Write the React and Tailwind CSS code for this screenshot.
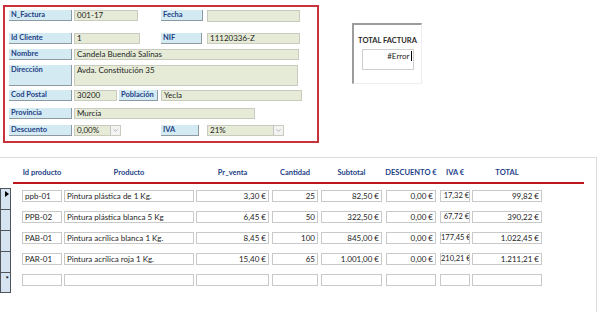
import { FiChevronDown } from 'react-icons/fi';

const rows = [
  { id: 'ppb-01', name: 'Pintura plástica de 1 Kg.', price: '3,30 €', qty: '25', sub: '82,50 €', desc: '0,00 €', iva: '17,32 €', total: '99,82 €' },
  { id: 'PPB-02', name: 'Pintura plástica blanca 5 Kg', price: '6,45 €', qty: '50', sub: '322,50 €', desc: '0,00 €', iva: '67,72 €', total: '390,22 €' },
  { id: 'PAB-01', name: 'Pintura acrílica blanca 1 Kg.', price: '8,45 €', qty: '100', sub: '845,00 €', desc: '0,00 €', iva: '177,45 €', total: '1.022,45 €' },
  { id: 'PAR-01', name: 'Pintura acrílica roja 1 Kg.', price: '15,40 €', qty: '65', sub: '1.001,00 €', desc: '0,00 €', iva: '210,21 €', total: '1.211,21 €' },
];

const cols = [
  { key: 'id', w: 'w-[40px]', ml: 'ml-0', pad: 'px-[2px] text-[8px]', align: 'text-left', head: 'Id producto' },
  { key: 'name', w: 'w-[130px]', ml: 'ml-[2px]', pad: 'px-[2px] text-[8px]', align: 'text-left', head: 'Producto' },
  { key: 'price', w: 'w-[73px]', ml: 'ml-[2px]', pad: 'px-[2px] text-[8px]', align: 'text-right', head: 'Pr_venta' },
  { key: 'qty', w: 'w-[46px]', ml: 'ml-[3px]', pad: 'px-[2px] text-[8px]', align: 'text-right', head: 'Cantidad' },
  { key: 'sub', w: 'w-[61px]', ml: 'ml-[3px]', pad: 'px-[2px] text-[8px]', align: 'text-right', head: 'Subtotal' },
  { key: 'desc', w: 'w-[50px]', ml: 'ml-[4px]', pad: 'px-[2px] text-[8px]', align: 'text-right', head: 'DESCUENTO €' },
  { key: 'iva', w: 'w-[30px]', ml: 'ml-[4px]', pad: 'px-0 text-[7.5px]', align: 'text-right', head: 'IVA €' },
  { key: 'total', w: 'w-[70px]', ml: 'ml-[2px]', pad: 'px-[2px] text-[8px]', align: 'text-right', head: 'TOTAL' },
];

function Label({ children, w = 'w-[63px]', h = 'h-[11px]', ml = 'ml-0' }) {
  return (
    <div className={`${w} ${h} ${ml} shrink-0 bg-[#d4eaf2] border-r border-b border-[#8e9aa2] pl-[2px] text-[7.5px] leading-[10px] font-bold text-[#233f86] whitespace-nowrap overflow-hidden`}>
      {children}
    </div>
  );
}

function Field({ children, w, h = 'h-[11px]', ml = 'ml-[2px]' }) {
  return (
    <div className={`${w} ${h} ${ml} shrink-0 bg-[#e5ebd6] border border-[#c8cbbd] pl-[2px] text-[8px] leading-[9px] text-[#1e1e1e] whitespace-nowrap overflow-hidden`}>
      {children}
    </div>
  );
}

function Combo({ children, w, ml = 'ml-[2px]' }) {
  return (
    <div className={`${w} h-[11px] ${ml} shrink-0 flex bg-[#e5ebd6] border border-[#c8cbbd] text-[8px] leading-[9px] text-[#1e1e1e]`}>
      <div className="flex-1 pl-[2px] whitespace-nowrap overflow-hidden">{children}</div>
      <div className="w-[10px] h-full flex items-center justify-center bg-[#f3f3f3] border-l border-[#c4c4c4] text-[#8a8a8a]">
        <FiChevronDown size={7} />
      </div>
    </div>
  );
}

function Cell({ value, col }) {
  return (
    <div className={`${col.w} ${col.ml} ${col.pad} h-[12px] shrink-0 bg-white border border-[#c9c9c9] leading-[10px] text-[#1e1e1e] whitespace-nowrap overflow-hidden ${col.align}`}>
      {value}
    </div>
  );
}

function Selector({ mark, last }) {
  return (
    <div className={`w-[11px] h-[21px] shrink-0 bg-[#d6e3f1] border-x border-t border-[#50555c] ${last ? 'border-b' : ''} flex justify-end pr-[1px] pt-[2px]`}>
      {mark === 'current' ? (
        <svg width="4" height="6" viewBox="0 0 4 6"><path d="M0 0 L4 3 L0 6 Z" fill="#000" /></svg>
      ) : null}
      {mark === 'new' ? <span className="text-[8px] leading-[8px] font-bold text-black">*</span> : null}
    </div>
  );
}

export default function App() {
  return (
    <div className="w-[600px] h-[312px] overflow-hidden bg-white font-['Lato','Liberation_Sans',sans-serif]">
      <div className="flex items-start">
        <div className="ml-[3px] mt-[5px] w-[316px] h-[138px] border-2 border-[#c8323b] pl-[4px] pt-[3px]">
          <div className="flex">
            <Label>N_Factura</Label>
            <Field w="w-[64px]">001-17</Field>
            <Label w="w-[42px]" ml="ml-[23px]">Fecha</Label>
            <Field w="w-[93px]" ml="ml-[4px]" h="h-[12px]" />
          </div>
          <div className="flex mt-[11px]">
            <Label>Id Cliente</Label>
            <Field w="w-[66px]">1</Field>
            <Label w="w-[41px]" ml="ml-[21px]">NIF</Label>
            <Field w="w-[93px]" ml="ml-[5px]">11120336-Z</Field>
          </div>
          <div className="flex mt-[5px]">
            <Label>Nombre</Label>
            <Field w="w-[225px]">Candela Buendía Salinas</Field>
          </div>
          <div className="flex mt-[5px]">
            <Label h="h-[21px]">Dirección</Label>
            <Field w="w-[224px]" h="h-[21px]">Avda. Constitución 35</Field>
          </div>
          <div className="flex mt-[4px]">
            <Label>Cod Postal</Label>
            <Field w="w-[43px]">30200</Field>
            <Label w="w-[39px]" ml="ml-[2px]">Población</Label>
            <Field w="w-[141px]" ml="ml-[3px]">Yecla</Field>
          </div>
          <div className="flex mt-[7px]">
            <Label>Provincia</Label>
            <Field w="w-[181px]">Murcia</Field>
          </div>
          <div className="flex mt-[6px]">
            <Label>Descuento</Label>
            <Combo w="w-[47px]">0,00%</Combo>
            <Label w="w-[38px]" ml="ml-[40px]">IVA</Label>
            <Combo w="w-[77px]" ml="ml-[8px]">21%</Combo>
          </div>
        </div>

        <div className="ml-[33px] mt-[23px] w-[70px] h-[61px] border-l-2 border-t-2 border-[#9c9c9c] border-r border-b border-r-[#eeeeee] border-b-[#eeeeee] flex flex-col items-center">
          <div className="mt-[11px] text-[7.5px] leading-[9px] font-bold text-[#2a2a2a] whitespace-nowrap">TOTAL FACTURA</div>
          <div className="mt-[4px] w-[52px] h-[21px] border border-[#cfcfcf] flex justify-end items-start pr-[1px] pt-[1px]">
            <span className="text-[8px] leading-[10px] text-[#1e1e1e]">#Error</span>
            <span className="w-px h-[10px] bg-black ml-[1px]" />
          </div>
        </div>
      </div>

      <div className="mt-[14px] w-[597px] h-[160px] border-t border-r border-[#dcdcdc] flex flex-col">
        <div className="flex pl-[22px] pt-[10px]">
          {cols.map((c) => (
            <div key={c.key} className={`${c.w} ${c.ml} shrink-0 text-center text-[7.5px] leading-[10px] font-bold text-[#233f86] whitespace-nowrap flex justify-center`}>
              {c.head}
            </div>
          ))}
        </div>
        <div className="ml-[13px] mt-[4px] w-[571px] h-[2px] bg-[#c0141e]" />
        <div className="mt-[4px] flex flex-col">
          {rows.map((r, i) => (
            <div key={r.id} className="flex items-start">
              <Selector mark={i === 0 ? 'current' : null} />
              <div className="flex ml-[11px] mt-[2px]">
                {cols.map((c) => (
                  <Cell key={c.key} value={r[c.key]} col={c} />
                ))}
              </div>
            </div>
          ))}
          <div className="flex items-start">
            <Selector mark="new" last />
            <div className="flex ml-[11px] mt-[2px]">
              {cols.map((c) => (
                <Cell key={c.key} value="" col={c} />
              ))}
            </div>
          </div>
        </div>
      </div>
    </div>
  );
}
